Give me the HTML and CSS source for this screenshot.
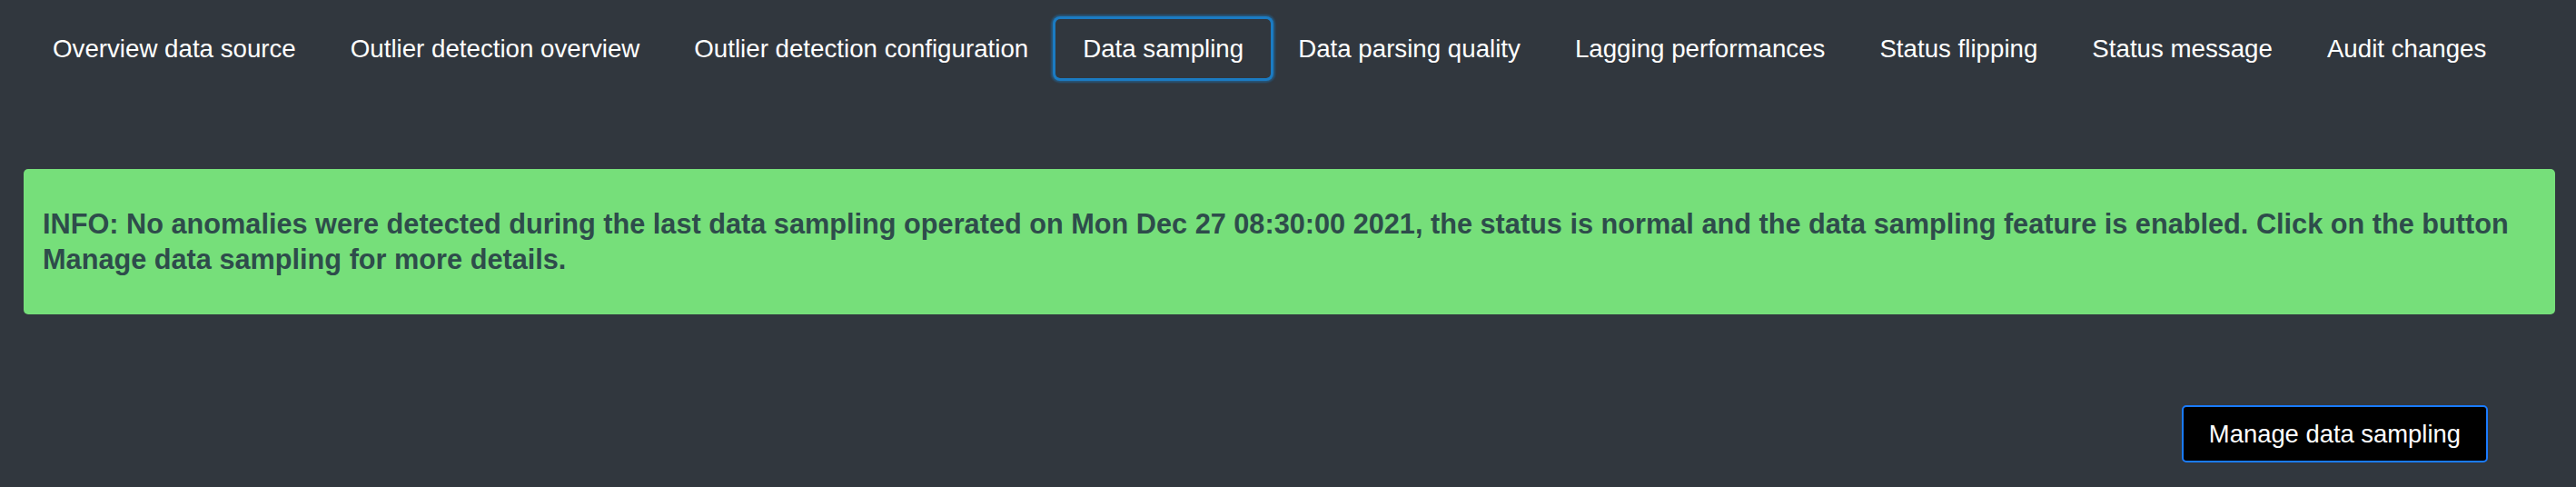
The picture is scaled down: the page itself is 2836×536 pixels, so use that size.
FILE: index.html
```html
<!DOCTYPE html>
<html lang="en">
<head>
<meta charset="utf-8">
<title>Data sampling</title>
<link rel="stylesheet" href="styles.css">
</head>
<body>
<nav class="tabs">
  <a class="tab">Overview data source</a>
  <a class="tab">Outlier detection overview</a>
  <a class="tab">Outlier detection configuration</a>
  <a class="tab tab-active">Data sampling</a>
  <a class="tab">Data parsing quality</a>
  <a class="tab">Lagging performances</a>
  <a class="tab">Status flipping</a>
  <a class="tab">Status message</a>
  <a class="tab">Audit changes</a>
</nav>
<div class="alert">INFO: No anomalies were detected during the last data sampling operated on Mon Dec 27 08:30:00 2021, the status is normal and the data sampling feature is enabled. Click on the button Manage data sampling for more details.</div>
<div class="actions">
  <button class="btn">Manage data sampling</button>
</div>
</body>
</html>
```
FILE: styles.css
```css
html, body {
  margin: 0;
  padding: 0;
  background: #31373e;
  height: 100%;
}
body {
  font-family: "Liberation Sans", Arial, sans-serif;
  color: #ffffff;
}
.tabs {
  display: flex;
  align-items: center;
  padding: 21px 0 0 28px;
}
.tab {
  display: flex;
  align-items: center;
  height: 65px;
  padding: 0 30px;
  font-size: 27.7px;
  color: #ffffff;
  white-space: nowrap;
  border-radius: 5px;
}
.tab-active {
  box-shadow: 0 0 0 3px #1b7bc2, 0 0 2px 5px rgba(27, 123, 194, 0.45);
}
.alert {
  margin: 100px 23px 0 26px;
  padding: 41px 20px 41px 21px;
  background: #76df7a;
  border-radius: 5px;
  color: #2e4c4b;
  font-weight: bold;
  font-size: 30.7px;
  line-height: 39px;
}
.actions {
  display: flex;
  justify-content: flex-end;
  padding: 100px 97px 0 0;
}
.btn {
  height: 63px;
  padding: 0 28px;
  background: #000000;
  color: #ffffff;
  border: 2px solid #1a7bff;
  border-radius: 5px;
  font-family: "Liberation Sans", Arial, sans-serif;
  font-size: 27.4px;
}
```
